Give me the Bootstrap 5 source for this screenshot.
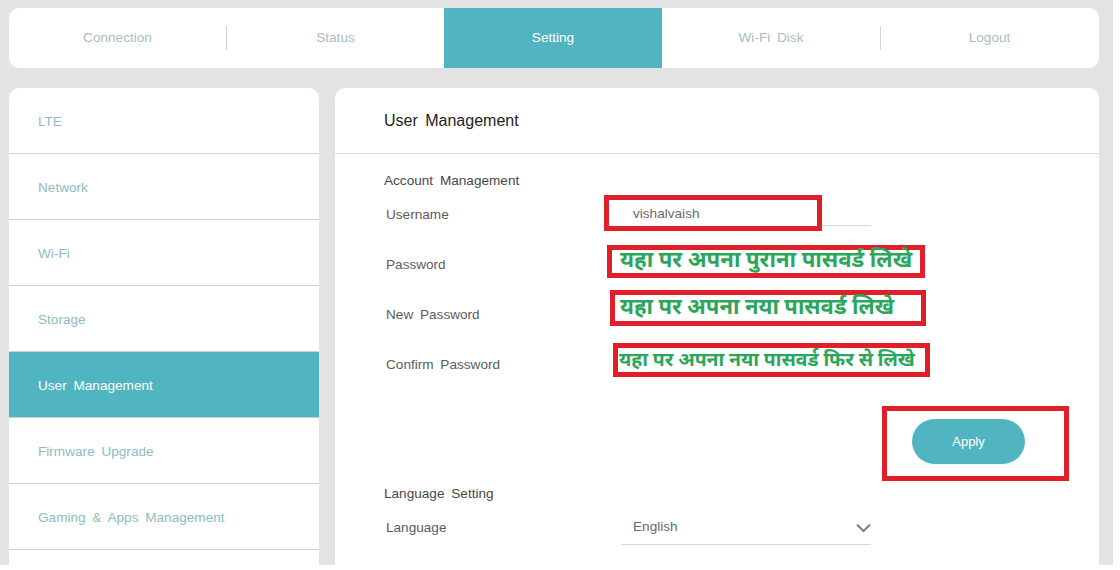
<!DOCTYPE html>
<html lang="en">
<head>
<meta charset="utf-8">
<title>User Management</title>
<link href="https://cdn.jsdelivr.net/npm/bootstrap@5.3.0/dist/css/bootstrap.min.css" rel="stylesheet">
<style>
html,body{height:100%;overflow:hidden;background:#fff}
body{font-family:"Liberation Sans",Arial,sans-serif;font-size:13.6px;color:#5c5c5c;word-spacing:3px}
.pagewrap{width:1113px;height:565px;background:#e3e3e3;padding:8px 14px 0 9px;overflow:hidden}
.topbar{height:60px;border-radius:10px;overflow:hidden}
.topitem{width:217px;color:#a9bdc1}
.topwide{width:218px}
.topitem.active-tab{background:#51b5c1;color:#fff}
.sepline{width:1px;height:24px;background:#d4d4d4}
.mainrow{margin-top:20px;gap:16px}
.sidepanel{width:310px;border-radius:10px 10px 0 0;overflow:hidden;height:500px}
.sideitem{height:66px;border-bottom:1px solid #cfcfcf;padding:25px 0 0 29px;color:#8fbbc1;line-height:18px}
.sideitem.active-side{background:#51b5c1;color:#fff}
.contentpanel{width:764px;border-radius:10px 10px 0 0;height:500px}
.headbox{height:66px;border-bottom:1px solid #dcdcdc;padding:23px 0 0 49px;font-size:16px;color:#222;line-height:20px}
.sectlabel{color:#484848;padding-left:49px;line-height:18px;margin-top:18px}
.sectlabel2{margin-top:4px}
.formline{height:50px;padding-left:51px}
.labelcell{width:218px}
.underfield{width:250px;margin-left:17px;border-bottom:1px solid #d8d8d8;padding:0 0 0 12px;color:#6a6a6a}
.userfield{height:22px}
.langfield{height:34px}
.redbox{position:absolute;border:5px solid #e01f2b;background:#fff;color:#2ca65a;font-weight:700;font-family:"Liberation Serif","Noto Sans",serif;white-space:nowrap;word-spacing:0;display:flex;align-items:center}
.note0{left:604px;top:195px;width:218px;height:36px;padding:2px 0 0 24px;color:#6a6a6a;font-weight:400;font-family:"Liberation Sans",sans-serif;font-size:13.6px}
.note1{left:607px;top:245px;width:318px;height:33px;padding:0 0 4px 8px;font-size:22.2px}
.note2{left:610px;top:290px;width:316px;height:36px;padding:0 0 4px 5px;font-size:22px}
.note3{left:613px;top:343px;width:317px;height:34px;padding:0 0 0 1px;font-size:19.4px}
.applyrow{padding-right:30px;margin-top:16px}
.applywrap{width:187px;height:75px;border:5px solid #e01f2b;padding:8px 0 0 25px}
.applybtn{width:113px;height:45px;border-radius:23px;background:#51b5c1;color:#fff;border:0;font-size:13px;padding:0}
</style>
</head>
<body>
<div class="pagewrap position-relative">
<div class="topbar bg-white d-flex">
 <div class="topitem d-flex align-items-center justify-content-center">Connection</div><div class="sepline align-self-center"></div>
 <div class="topitem d-flex align-items-center justify-content-center">Status</div>
 <div class="topitem topwide active-tab d-flex align-items-center justify-content-center">Setting</div>
 <div class="topitem topwide d-flex align-items-center justify-content-center">Wi-Fi Disk</div><div class="sepline align-self-center"></div>
 <div class="topitem d-flex align-items-center justify-content-center">Logout</div>
</div>
<div class="mainrow d-flex">
 <div class="sidepanel bg-white">
  <div class="sideitem">LTE</div>
  <div class="sideitem">Network</div>
  <div class="sideitem">Wi-Fi</div>
  <div class="sideitem">Storage</div>
  <div class="sideitem active-side">User Management</div>
  <div class="sideitem">Firmware Upgrade</div>
  <div class="sideitem">Gaming &amp; Apps Management</div>
 </div>
 <div class="contentpanel bg-white">
  <div class="headbox">User Management</div>
  <div class="sectlabel">Account Management</div>
  <div class="formline d-flex align-items-center">
   <div class="labelcell">Username</div>
   <div class="underfield userfield"></div>
  </div>
  <div class="formline d-flex align-items-center"><div class="labelcell">Password</div></div>
  <div class="formline d-flex align-items-center"><div class="labelcell">New Password</div></div>
  <div class="formline d-flex align-items-center"><div class="labelcell">Confirm Password</div></div>
  <div class="applyrow d-flex justify-content-end">
   <div class="applywrap"><button class="applybtn" type="button">Apply</button></div>
  </div>
  <div class="sectlabel sectlabel2">Language Setting</div>
  <div class="formline d-flex align-items-center">
   <div class="labelcell">Language</div>
   <div class="underfield langfield d-flex align-items-center justify-content-between">English
    <svg width="15" height="10" viewBox="0 0 15 10" aria-hidden="true"><path d="M1 1.5 7.5 8 14 1.5" fill="none" stroke="#808080" stroke-width="2"/></svg>
   </div>
  </div>
 </div>
</div>
<div class="redbox note0">vishalvaish</div>
<div class="redbox note1">यहा पर अपना पुराना पासवर्ड लिखे</div>
<div class="redbox note2">यहा पर अपना नया पासवर्ड लिखे</div>
<div class="redbox note3">यहा पर अपना नया पासवर्ड फिर से लिखे</div>
</div>
</body>
</html>
